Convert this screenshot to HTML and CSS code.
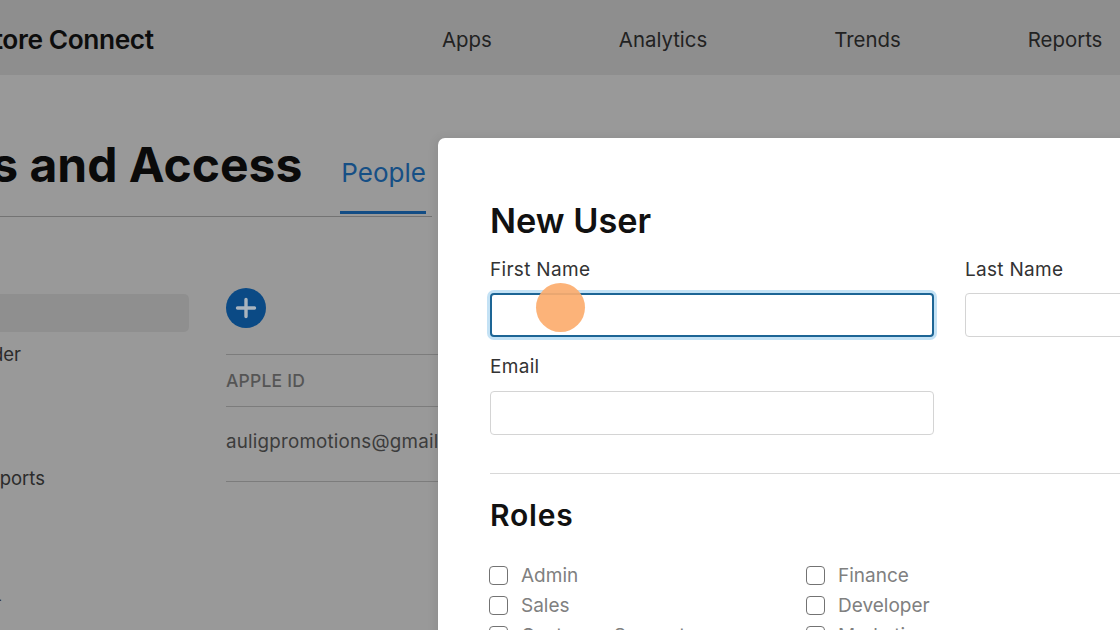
FILE: index.html
```html
<!DOCTYPE html>
<html lang="en">
<head>
<meta charset="utf-8">
<title>Users and Access</title>
<link rel="stylesheet" href="styles.css">
</head>
<body>
<div class="page">
  <header class="topbar">
    <div class="brand">App Store Connect</div>
    <nav class="mainnav">
      <span>Apps</span>
      <span>Analytics</span>
      <span>Trends</span>
      <span>Reports</span>
    </nav>
  </header>
  <div class="titlebar">
    <h1>Users and Access</h1>
    <div class="tab">People</div>
  </div>
  <div class="content">
    <aside class="sidebar">
      <div class="side-item selected"></div>
      <div class="side-item">Account Holder</div>
      <div class="side-item spaced">Access to Reports</div>
      <div class="side-item tiny">.</div>
    </aside>
    <main class="people">
      <button class="add" aria-label="Add user">
        <svg viewBox="0 0 40 40" width="40" height="40"><circle cx="20" cy="20" r="20" fill="#0b4a85"/><path d="M20 11.5v17M11.5 20h17" stroke="#a9b4be" stroke-width="3.4" stroke-linecap="round"/></svg>
      </button>
      <div class="th">APPLE ID</div>
      <div class="td">auligpromotions@gmail.com</div>
    </main>
  </div>
</div>
<div class="modal">
  <h2>New User</h2>
  <div class="name-row">
    <div class="field">
      <label>First Name</label>
      <div class="input focused"></div>
    </div>
    <div class="field">
      <label>Last Name</label>
      <div class="input"></div>
    </div>
  </div>
  <div class="field email">
    <label>Email</label>
    <div class="input"></div>
  </div>
  <hr class="rule">
  <h3>Roles</h3>
  <div class="roles">
    <div class="role"><span class="box"></span>Admin</div>
    <div class="role"><span class="box"></span>Finance</div>
    <div class="role"><span class="box"></span>Sales</div>
    <div class="role"><span class="box"></span>Developer</div>
    <div class="role"><span class="box"></span>Customer Support</div>
    <div class="role"><span class="box"></span>Marketing</div>
  </div>
</div>
<div class="click"></div>
</body>
</html>
```
FILE: styles.css
```css
* { box-sizing: border-box; }
html, body { margin: 0; height: 630px; overflow: hidden; }
body { background: #999; font-family: Inter, "Liberation Sans", sans-serif; color: #111; position: relative; }
.page { height: 630px; overflow: hidden; }

.topbar { height: 75px; padding-top: 3px; background: #8e8e8e; display: flex; align-items: center; }
.brand { margin-left: -80px; width: 522px; flex: none; font-size: 26.3px; font-weight: 600; letter-spacing: -0.4px; color: #0d0d0d; white-space: nowrap; }
.mainnav { display: flex; gap: 127px; font-size: 20.4px; color: #222; flex: none; }

.titlebar { margin: 62px 0 0 -119px; height: 80px; width: 551px; border-bottom: 1px solid #737373; display: flex; align-items: flex-start; }
h1 { margin: 0; font-size: 48px; line-height: 56px; font-weight: 700; color: #0a0a0a; white-space: nowrap; flex: none; }
.tab { margin-left: 38px; height: 77px; width: 86px; padding: 20px 0 0 1px; border-bottom: 3px solid #134d85; color: #164f85; font-size: 26px; line-height: 32px; flex: none; }

.content { display: flex; }
.sidebar { width: 226px; flex: none; padding-top: 77px; font-size: 18.5px; color: #2b2b2b; }
.side-item { margin-left: -200px; width: 389px; height: 38px; line-height: 38px; text-align: right; padding-right: 168px; white-space: nowrap; }
.side-item.selected { background: #8f8f8f; border-radius: 5px; }
.side-item:nth-child(2) { margin-top: 3px; }
.side-item.spaced { margin-top: 86px; padding-right: 144px; }
.side-item.tiny { margin-top: 81px; padding-right: 187px; font-size: 12px; }

.people { width: 300px; flex: none; padding-top: 71px; color: #3a3a3a; }
.add { display: block; width: 40px; height: 40px; padding: 0; border: 0; background: none; }
.add svg { display: block; }
.th { margin-top: 26px; height: 53px; line-height: 51px; border-top: 1px solid #7c7c7c; border-bottom: 1px solid #7c7c7c; font-size: 17.5px; font-weight: 500; color: #555; letter-spacing: .2px; }
.td { height: 75px; line-height: 70px; border-bottom: 1px solid #7c7c7c; font-size: 18.8px; letter-spacing: .2px; color: #3c3c3c; white-space: nowrap; }

.modal { position: absolute; left: 438px; top: 138px; width: 800px; height: 600px; background: #fff; border-radius: 7px 0 0 0; padding: 63px 0 0 52px; box-shadow: -2px 0 10px rgba(0,0,0,.08); }
h2 { margin: 0; font-size: 34.3px; line-height: 40px; font-weight: 600; color: #111; }
.name-row { display: flex; gap: 31px; margin-top: 17px; }
.field { width: 444px; flex: none; }
label { display: block; font-size: 19px; line-height: 24px; color: #333; letter-spacing: .3px; }
.input { height: 44px; margin-top: 11px; border: 1px solid #d4d4d4; border-radius: 4px; background: #fff; }
.input.focused { border: 2px solid #1d6595; box-shadow: 0 0 0 3px #c4e2f5; }
.email { margin-top: 18px; }
.email .input { margin-top: 12px; }
.rule { margin: 38px 0 0; border: 0; border-top: 1px solid #d8d8d8; }
h3 { margin: 23px 0 0; font-size: 30px; line-height: 36px; font-weight: 600; color: #111; letter-spacing: .8px; }
.roles { display: grid; grid-template-columns: 317px 317px; margin-top: 27px; }
.role { height: 30px; display: flex; align-items: center; gap: 13px; font-size: 19px; color: #808080; margin-left: -1px; }
.box { width: 19px; height: 19px; border: 1.5px solid #737373; border-radius: 4px; flex: none; }

.click { position: absolute; left: 536px; top: 283px; width: 49px; height: 49px; border-radius: 50%; background: rgba(252,172,110,.92); }
```
